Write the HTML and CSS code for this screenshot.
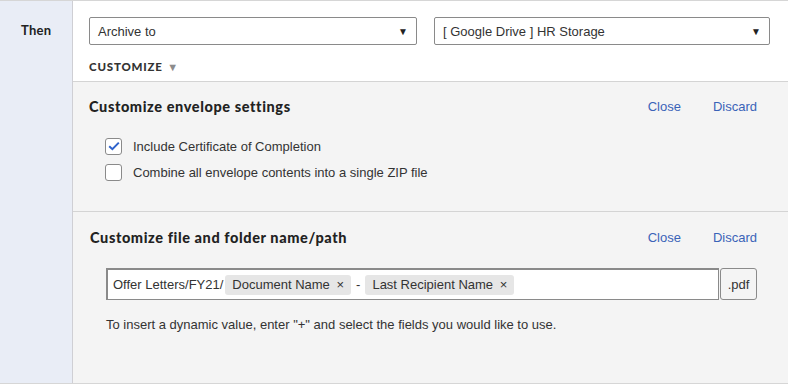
FILE: index.html
```html
<!DOCTYPE html>
<html lang="en">
<head>
    <meta charset="UTF-8">
    <title>Archive rule</title>
    <link rel="stylesheet" href="styles.css">
</head>
<body>
    <div class="rule-cont">
        <div class="label-cont">Then</div>

        <div class="body-cont">
            <div class="action-cont">
                <div class="select-row">
                    <div class="select-box action-select">
                        <span>Archive to</span>
                        <span class="caret">&#9660;</span>
                    </div>
                    <div class="select-box target-select">
                        <span>[ Google Drive ] HR Storage</span>
                        <span class="caret">&#9660;</span>
                    </div>
                </div>
                <div class="customize-toggle">CUSTOMIZE <span class="toggle-caret">&#9660;</span></div>
            </div>

            <!-- envelope settings -->
            <div class="panel envelope-panel">
                <div class="panel-head">
                    <div class="panel-title">Customize envelope settings</div>
                    <div class="panel-links">
                        <a class="link">Close</a>
                        <a class="link">Discard</a>
                    </div>
                </div>
                <label class="check-row">
                    <span class="check-box checked">
                        <svg width="12" height="10" viewBox="0 0 12 10"><path d="M1.2 5.2 L4.4 8.2 L10.8 1.6" fill="none" stroke="#2f63cc" stroke-width="2"/></svg>
                    </span>
                    Include Certificate of Completion
                </label>
                <label class="check-row">
                    <span class="check-box"></span>
                    Combine all envelope contents into a single ZIP file
                </label>
            </div>

            <!-- file name -->
            <div class="panel path-panel">
                <div class="panel-head">
                    <div class="panel-title">Customize file and folder name/path</div>
                    <div class="panel-links">
                        <a class="link">Close</a>
                        <a class="link">Discard</a>
                    </div>
                </div>
                <div class="path-row">
                    <div class="path-input">
                        <span>Offer Letters/FY21/</span>
                        <span class="chip">Document Name <span class="chip-x">&times;</span></span>
                        <span class="sep">-</span>
                        <span class="chip">Last Recipient Name <span class="chip-x">&times;</span></span>
                    </div>
                    <div class="ext-box">.pdf</div>
                </div>
                <div class="help-text">To insert a dynamic value, enter "+" and select the fields you would like to use.</div>
            </div>
        </div>
    </div>
</body>
</html>
```

FILE: styles.css
```css
* {
    box-sizing: border-box;
}

body {
    margin: 0;
    padding: 0;
    font-family: "Liberation Sans", Arial, sans-serif;
    font-size: 13px;
    color: #333;
}

.rule-cont {
    width: 788px;
    height: 384px;
    display: flex;
    border-top: 1px solid #d6d6d6;
    border-right: 1px solid #d6d6d6;
    border-bottom: 1px solid #d6d6d6;
}

.label-cont {
    width: 73px;
    flex-shrink: 0;
    background-color: #e9edf6;
    border-right: 1px solid #cfcfd4;
    font-family: Lato, sans-serif;
    font-weight: bold;
    font-size: 13px;
    letter-spacing: 0.3px;
    color: #222;
    padding: 21px 0 0 21px;
}

.body-cont {
    flex: 1;
    display: flex;
    flex-direction: column;
}

.action-cont {
    background-color: white;
    padding: 16px 16px 0 16px;
    height: 80px;
}

.select-row {
    display: flex;
    gap: 17px;
}

.select-box {
    height: 28px;
    border: 1px solid #8a8a8a;
    border-radius: 2px;
    display: flex;
    align-items: center;
    justify-content: space-between;
    padding: 0 8px 0 8px;
    color: #333;
}

.action-select {
    width: 328px;
}

.target-select {
    width: 336px;
}

.caret {
    font-size: 10px;
    color: #222;
}

.customize-toggle {
    margin-top: 15px;
    font-family: Lato, sans-serif;
    font-weight: 900;
    font-size: 11.5px;
    letter-spacing: 0.8px;
    color: #333;
}

.toggle-caret {
    font-size: 11px;
    color: #8c8c8c;
    margin-left: 1px;
}

.panel {
    background-color: #f4f4f4;
    border-top: 1px solid #d4d4d4;
    padding: 0 31px 0 16px;
}

.envelope-panel {
    height: 130px;
    padding-top: 15px;
}

.path-panel {
    flex: 1;
    padding-top: 16px;
}

.panel-head {
    display: flex;
    justify-content: space-between;
    align-items: center;
    height: 18px;
}

.panel-title {
    font-family: Lato, sans-serif;
    font-weight: 900;
    font-size: 14.5px;
    letter-spacing: 0.6px;
    color: #222;
}

.panel-links {
    display: flex;
    gap: 32px;
}

.link {
    color: #3a63b8;
    font-size: 13px;
}

.envelope-panel .panel-head {
    margin-bottom: 18px;
}

.check-row {
    display: flex;
    align-items: center;
    gap: 11px;
    height: 26px;
    padding-left: 16px;
    color: #333;
}

.check-box {
    width: 17px;
    height: 17px;
    background-color: white;
    border: 1px solid #8a8a8a;
    border-radius: 3px;
    display: flex;
    align-items: center;
    justify-content: center;
}

.path-panel .panel-head {
    margin-bottom: 22px;
    padding-left: 1px;
}

.path-row {
    display: flex;
    padding-left: 17px;
    height: 32px;
}

.path-input {
    width: 613px;
    background-color: white;
    border: 1px solid #8a8a8a;
    border-top-width: 2px;
    border-left-width: 2px;
    display: flex;
    align-items: center;
    gap: 2px;
    padding-left: 5px;
}

.chip {
    background-color: #e6e6e6;
    border-radius: 3px;
    height: 20px;
    line-height: 20px;
    padding: 0 7px 0 7px;
}

.chip-x {
    margin-left: 3px;
}

.sep {
    margin: 0 3px;
}

.ext-box {
    width: 37px;
    margin-left: 1px;
    background-color: #f4f4f4;
    border: 1px solid #8a8a8a;
    border-radius: 3px;
    display: flex;
    align-items: center;
    justify-content: center;
}

.help-text {
    margin-top: 17px;
    padding-left: 17px;
    color: #333;
}
```
